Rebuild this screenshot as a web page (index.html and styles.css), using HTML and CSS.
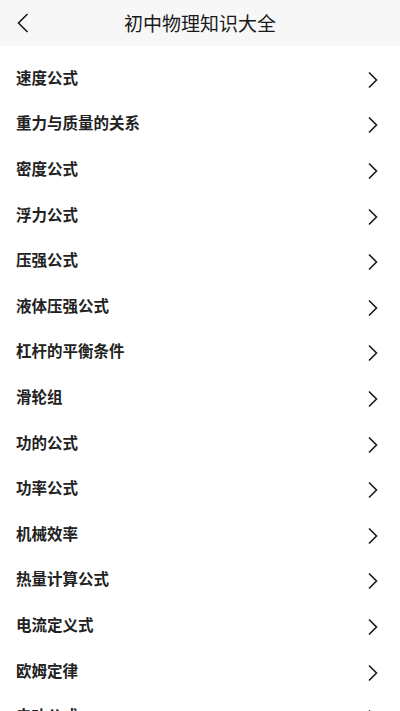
FILE: index.html
```html
<!DOCTYPE html>
<html lang="zh">
<head>
<meta charset="utf-8">
<link rel="stylesheet" href="styles.css">
</head>
<body>
<header class="bar">
  <svg class="back" width="14" height="22" viewBox="0 0 14 22"><path d="M11.5 2 L2.5 11 L11.5 20" fill="none" stroke="#1a1a1a" stroke-width="1.6"/></svg>
  <h1 class="title">初中物理知识大全</h1>
</header>
<ul class="list">
  <li class="row"><span>速度公式</span><svg class="chev" width="12" height="18" viewBox="0 0 12 18"><path d="M2 1.5 L9.5 9 L2 16.5" fill="none" stroke="#1a1a1a" stroke-width="1.6"/></svg></li>
  <li class="row"><span>重力与质量的关系</span><svg class="chev" width="12" height="18" viewBox="0 0 12 18"><path d="M2 1.5 L9.5 9 L2 16.5" fill="none" stroke="#1a1a1a" stroke-width="1.6"/></svg></li>
  <li class="row"><span>密度公式</span><svg class="chev" width="12" height="18" viewBox="0 0 12 18"><path d="M2 1.5 L9.5 9 L2 16.5" fill="none" stroke="#1a1a1a" stroke-width="1.6"/></svg></li>
  <li class="row"><span>浮力公式</span><svg class="chev" width="12" height="18" viewBox="0 0 12 18"><path d="M2 1.5 L9.5 9 L2 16.5" fill="none" stroke="#1a1a1a" stroke-width="1.6"/></svg></li>
  <li class="row"><span>压强公式</span><svg class="chev" width="12" height="18" viewBox="0 0 12 18"><path d="M2 1.5 L9.5 9 L2 16.5" fill="none" stroke="#1a1a1a" stroke-width="1.6"/></svg></li>
  <li class="row"><span>液体压强公式</span><svg class="chev" width="12" height="18" viewBox="0 0 12 18"><path d="M2 1.5 L9.5 9 L2 16.5" fill="none" stroke="#1a1a1a" stroke-width="1.6"/></svg></li>
  <li class="row"><span>杠杆的平衡条件</span><svg class="chev" width="12" height="18" viewBox="0 0 12 18"><path d="M2 1.5 L9.5 9 L2 16.5" fill="none" stroke="#1a1a1a" stroke-width="1.6"/></svg></li>
  <li class="row"><span>滑轮组</span><svg class="chev" width="12" height="18" viewBox="0 0 12 18"><path d="M2 1.5 L9.5 9 L2 16.5" fill="none" stroke="#1a1a1a" stroke-width="1.6"/></svg></li>
  <li class="row"><span>功的公式</span><svg class="chev" width="12" height="18" viewBox="0 0 12 18"><path d="M2 1.5 L9.5 9 L2 16.5" fill="none" stroke="#1a1a1a" stroke-width="1.6"/></svg></li>
  <li class="row"><span>功率公式</span><svg class="chev" width="12" height="18" viewBox="0 0 12 18"><path d="M2 1.5 L9.5 9 L2 16.5" fill="none" stroke="#1a1a1a" stroke-width="1.6"/></svg></li>
  <li class="row"><span>机械效率</span><svg class="chev" width="12" height="18" viewBox="0 0 12 18"><path d="M2 1.5 L9.5 9 L2 16.5" fill="none" stroke="#1a1a1a" stroke-width="1.6"/></svg></li>
  <li class="row"><span>热量计算公式</span><svg class="chev" width="12" height="18" viewBox="0 0 12 18"><path d="M2 1.5 L9.5 9 L2 16.5" fill="none" stroke="#1a1a1a" stroke-width="1.6"/></svg></li>
  <li class="row"><span>电流定义式</span><svg class="chev" width="12" height="18" viewBox="0 0 12 18"><path d="M2 1.5 L9.5 9 L2 16.5" fill="none" stroke="#1a1a1a" stroke-width="1.6"/></svg></li>
  <li class="row"><span>欧姆定律</span><svg class="chev" width="12" height="18" viewBox="0 0 12 18"><path d="M2 1.5 L9.5 9 L2 16.5" fill="none" stroke="#1a1a1a" stroke-width="1.6"/></svg></li>
  <li class="row"><span>电功公式</span><svg class="chev" width="12" height="18" viewBox="0 0 12 18"><path d="M2 1.5 L9.5 9 L2 16.5" fill="none" stroke="#1a1a1a" stroke-width="1.6"/></svg></li>
</ul>
</body>
</html>
```
FILE: styles.css
```css
html, body {
  margin: 0;
  padding: 0;
  background: #ffffff;
  font-family: "Noto Sans CJK SC", "Noto Sans", sans-serif;
  color: #1f1f1f;
  overflow: hidden;
}
.bar {
  height: 46px;
  background: #f7f7f7;
  display: flex;
  align-items: center;
  justify-content: center;
  position: relative;
}
.back {
  position: absolute;
  left: 16px;
  top: 12px;
}
.title {
  margin: 0;
  font-size: 19px;
  font-weight: 400;
  color: #1a1a1a;
  line-height: 46px;
}
.list {
  list-style: none;
  margin: 0;
  padding: 9px 0 0 0;
}
.row {
  height: 45.6px;
  display: flex;
  align-items: center;
  justify-content: space-between;
  padding: 0 21px 0 16px;
  font-size: 15.5px;
  font-weight: 700;
  color: #222;
}
.row span {
  transform: translateY(-1px);
}
.chev {
  transform: translateY(2px);
}
```
